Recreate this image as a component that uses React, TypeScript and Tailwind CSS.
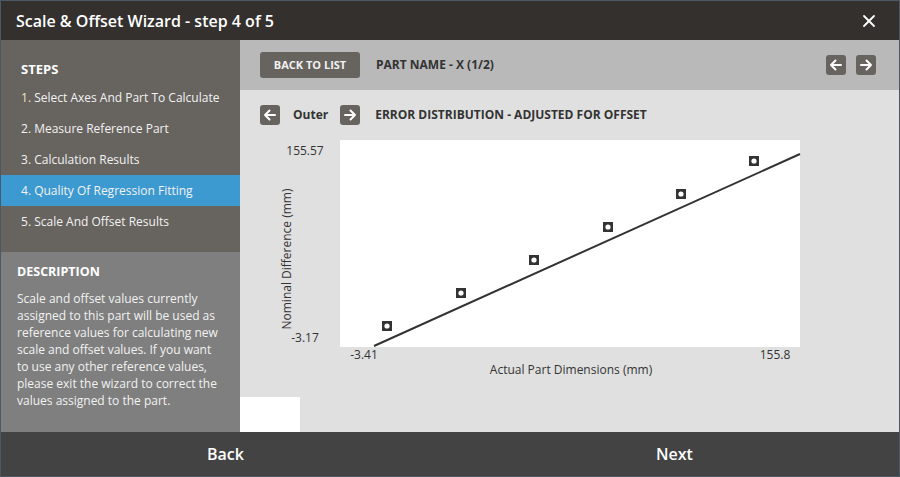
import { X } from 'lucide-react';

const STEPS = [
  'Select Axes And Part To Calculate',
  'Measure Reference Part',
  'Calculation Results',
  'Quality Of Regression Fitting',
  'Scale And Offset Results',
];

const ACTIVE_STEP = 3;

// chart points, in svg coordinates
const POINTS: Array<[number, number]> = [
  [127, 190],
  [201, 157],
  [274, 124],
  [348, 91],
  [421, 58],
  [494, 25],
];

function ArrowButton({ dir }: { dir: 'left' | 'right' }) {
  return (
    <button className="flex items-center justify-center w-5 h-5 rounded-[3px] bg-[#67635f]">
      <svg width="20" height="20" viewBox="0 0 20 20" fill="none" stroke="#ffffff" strokeWidth="2" strokeLinecap="round" strokeLinejoin="round">
        {dir === 'left' ? (
          <path d="M15 10H5M9.5 5.5L5 10l4.5 4.5" />
        ) : (
          <path d="M5 10h10M10.5 5.5L15 10l-4.5 4.5" />
        )}
      </svg>
    </button>
  );
}

function Chart() {
  return (
    <svg width="560" height="250" viewBox="0 0 560 250" className="block font-['Open_Sans',sans-serif]">
      <rect x="80" y="4" width="460" height="207" fill="#ffffff" />
      <line x1="114" y1="210" x2="540" y2="18" stroke="#333333" strokeWidth="2" />
      {POINTS.map(([x, y], i) => (
        <g key={i}>
          <rect x={x - 5} y={y - 5} width="10" height="10" fill="#333333" />
          <circle cx={x} cy={y} r="2.6" fill="#ffffff" />
        </g>
      ))}
      <g fill="#333333" fontSize="12">
        <text x="45" y="19" textAnchor="middle">155.57</text>
        <text x="45" y="206" textAnchor="middle">-3.17</text>
        <text x="104" y="223" textAnchor="middle">-3.41</text>
        <text x="515" y="223" textAnchor="middle">155.8</text>
        <text x="311" y="238" textAnchor="middle">Actual Part Dimensions (mm)</text>
        <text x="28" y="123" textAnchor="middle" dominantBaseline="middle" transform="rotate(-90 28 123)">
          Nominal Difference (mm)
        </text>
      </g>
    </svg>
  );
}

export default function App() {
  return (
    <div className="w-[900px] h-[477px] flex flex-col border border-[#4b5865] bg-[#e0e0e0] font-['Open_Sans',sans-serif] overflow-hidden">

      {/* Title bar */}
      <div className="h-[39px] flex-shrink-0 flex items-center justify-between pl-[15px] pr-[20px] bg-[#33302d]">
        <span className="text-white text-[16px] font-semibold">Scale &amp; Offset Wizard - step 4 of 5</span>
        <X size={20} strokeWidth={2.2} className="text-white" />
      </div>

      <div className="flex flex-1 min-h-0">

        {/* Sidebar */}
        <div className="w-[239px] flex-shrink-0 flex flex-col">
          <div className="h-[212px] bg-[#67635f] pt-[18px]">
            <div className="px-[20px] text-[13px] font-bold text-white h-[22px] leading-[22px]">STEPS</div>
            <div className="mt-[2px]">
              {STEPS.map((label, i) => (
                <div key={label}
                  className={`h-[31px] leading-[31px] px-[20px] whitespace-nowrap text-[12px] text-[#f2f2f2] ${i === ACTIVE_STEP ? 'bg-[#3d9ad0]' : ''}`}>
                  <span className={i === 0 ? 'text-[#f3e6bb]' : ''}>{i + 1}.</span> {label}
                </div>
              ))}
            </div>
          </div>
          <div className="flex-1 bg-[#7f7f7f] px-[16px] pt-[10px]">
            <div className="text-[12.5px] font-bold text-white h-[20px] leading-[20px]">DESCRIPTION</div>
            <p className="mt-[8px] text-[12px] leading-[17px] text-[#f2f2f2]">
              Scale and offset values currently assigned to this part will be used as reference values for calculating new scale and offset values. If you want to use any other reference values, please exit the wizard to correct the values assigned to the part.
            </p>
          </div>
        </div>

        {/* Main */}
        <div className="flex-1 flex flex-col min-w-0">
          <div className="h-[50px] flex-shrink-0 flex items-center bg-[#b9b9b9] pl-[20px] pr-[23px]">
            <button className="w-[100px] h-[26px] rounded-[3px] bg-[#67635f] text-[11px] font-bold text-[#f2f2f2]">BACK TO LIST</button>
            <span className="ml-[16px] text-[12px] font-bold text-[#333333]">PART NAME - X (1/2)</span>
            <div className="ml-auto flex gap-[10px]">
              <ArrowButton dir="left" />
              <ArrowButton dir="right" />
            </div>
          </div>

          <div className="flex-1 flex flex-col pt-[15px]">
            <div className="flex items-center pl-[20px] h-[20px]">
              <ArrowButton dir="left" />
              <span className="ml-[13px] text-[12px] font-bold text-[#333333]">Outer</span>
              <span className="ml-[12px]"><ArrowButton dir="right" /></span>
              <span className="ml-[15px] text-[12px] font-bold text-[#333333]">ERROR DISTRIBUTION - ADJUSTED FOR OFFSET</span>
            </div>
            <div className="mt-[11px] pl-[20px]">
              <Chart />
            </div>
            <div className="flex-1" />
            <div className="w-[60px] h-[35px] bg-white" />
          </div>
        </div>
      </div>

      {/* Footer */}
      <div className="h-[44px] flex-shrink-0 flex bg-[#434343]">
        <button className="flex-1 flex items-center justify-center text-white text-[16px] font-semibold">Back</button>
        <button className="flex-1 flex items-center justify-center text-white text-[16px] font-semibold">Next</button>
      </div>
    </div>
  );
}
